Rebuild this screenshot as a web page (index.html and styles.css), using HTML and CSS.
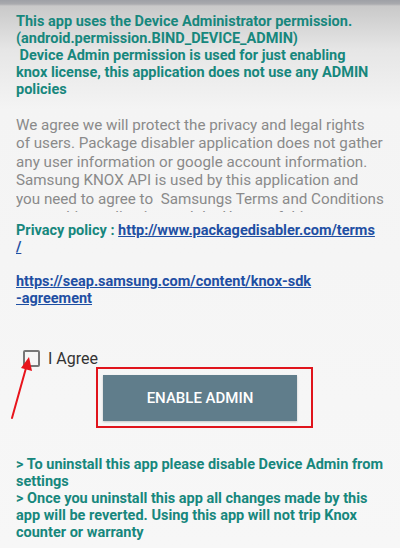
FILE: index.html
```html
<!DOCTYPE html>
<html lang="en">
<head>
    <meta charset="UTF-8">
    <meta name="viewport" content="width=device-width, initial-scale=1.0">
    <title>Package Disabler - Device Admin</title>
    <link rel="stylesheet" href="styles.css">
</head>
<body>

    <div class="screen">
        <!-- Aviso de administrador -->
        <p class="notice">
            This app uses the Device Administrator permission.<br>
            (android.permission.BIND_DEVICE_ADMIN)<br>
            &nbsp;Device Admin permission is used for just enabling<br>
            knox license, this application does not use any ADMIN<br>
            policies
        </p>

        <div class="terms">
            <p>We agree we will protect the privacy and legal rights<br>
            of users. Package disabler application does not gather<br>
            any user information or google account information.<br>
            Samsung KNOX API is used by this application and<br>
            you need to agree to &nbsp;Samsungs Terms and Conditions<br>
            to use this application and the Usage of this app means you agree.</p>
        </div>

        <p class="links">
            Privacy policy : <a href="#">http://www.packagedisabler.com/terms<br>/</a><br><br>
            <a href="#">https://seap.samsung.com/content/knox-sdk<br>-agreement</a>
        </p>

        <label class="agree">
            <span class="check"></span>
            I Agree
        </label>

        <div class="action">
            <div class="highlight">
                <button class="enable">ENABLE ADMIN</button>
            </div>
        </div>

        <p class="notice bottom">
            &gt; To uninstall this app please disable Device Admin from<br>
            settings<br>
            &gt; Once you uninstall this app all changes made by this<br>
            app will be reverted. Using this app will not trip Knox<br>
            counter or warranty
        </p>

        <!-- Flecha roja de anotacion -->
        <svg class="arrow" width="30" height="70" viewBox="0 0 30 70">
            <line x1="4" y1="66" x2="18" y2="16" stroke="#e8141c" stroke-width="2" stroke-linecap="round"/>
            <polygon points="21,5 24,19 13,16" fill="#e8141c"/>
        </svg>
    </div>

</body>
</html>
```

FILE: styles.css
```css
/* Fondo con sombra superior */
body {
    margin: 0;
    padding: 0;
    height: 548px;
    overflow: hidden;
    background: linear-gradient(to bottom, #9ea0a6 0px, #a9aaae 4px, #c9c9c9 6px, #e6e6e6 50px, #f4f4f4 110px, #f7f7f7 100%);
    font-family: Roboto, "Noto Sans", Arial, sans-serif;
}

.screen {
    position: relative;
    padding: 13px 16px 0 16px;
}

/* Texto verde en negrita */
.notice {
    margin: 0;
    color: #17877d;
    font-weight: bold;
    font-size: 14.5px;
    line-height: 17px;
    white-space: nowrap;
}

/* Caja de terminos recortada */
.terms {
    margin-top: 18px;
    height: 96px;
    overflow: hidden;
}

.terms p {
    margin: 0;
    color: #8a8a8a;
    font-size: 15.2px;
    line-height: 18.4px;
    white-space: nowrap;
}

.links {
    margin: 10px 0 0 0;
    color: #17877d;
    font-weight: bold;
    font-size: 14.5px;
    line-height: 17px;
}

.links a {
    color: #1f4fa3;
    text-decoration: underline;
}

/* Casilla "I Agree" */
.agree {
    display: flex;
    align-items: center;
    gap: 8px;
    margin: 42px 0 0 7px;
    font-size: 16px;
    color: #333;
    height: 18px;
}

.check {
    width: 13px;
    height: 13px;
    border: 2px solid #777;
    border-radius: 2px;
}

/* Boton con recuadro rojo */
.action {
    padding-left: 80px;
}

.highlight {
    display: inline-block;
    border: 2px solid #e0141c;
    padding: 6px 14px 5px 5px;
}

.enable {
    display: block;
    width: 194px;
    height: 46px;
    background-color: #607d8b;
    color: #fff;
    border: none;
    font-family: Roboto, "Noto Sans", Arial, sans-serif;
    font-size: 15px;
    font-weight: 500;
    box-shadow: 0 1px 2px rgba(0, 0, 0, 0.2);
}

.bottom {
    margin-top: 28px;
}

.arrow {
    position: absolute;
    left: 8px;
    top: 352px;
}
```
